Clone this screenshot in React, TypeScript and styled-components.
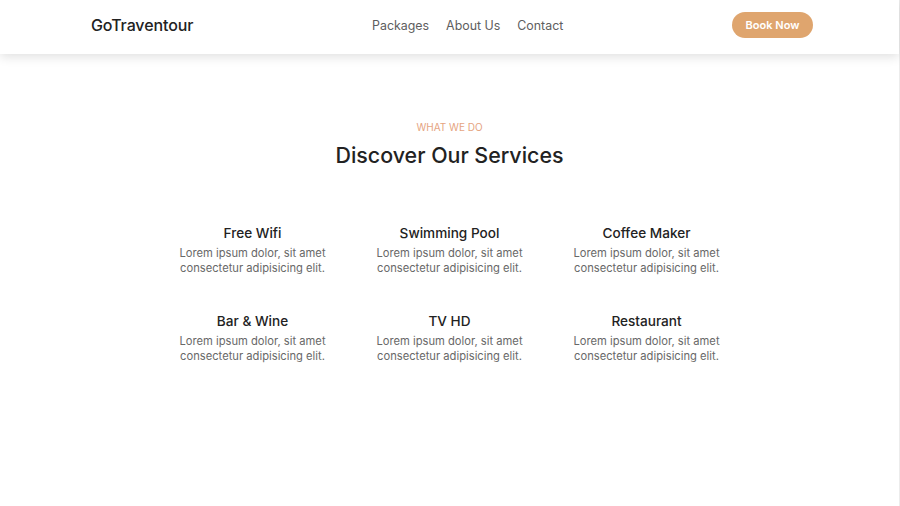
import React from "react";
import styled, { createGlobalStyle } from "styled-components";

const Global = createGlobalStyle`
  html, body { margin: 0; padding: 0; background: #fff; }
  body { font-family: "Inter", "Noto Sans", sans-serif; color: #222; }
  * { box-sizing: border-box; }
`;

const Page = styled.div`
  min-height: 506px;
  border-right: 1px solid #ececec;
  background: #fff;
`;

const Header = styled.header`
  height: 54px;
  display: flex;
  align-items: center;
  justify-content: space-between;
  padding: 0 86px 4px 91px;
  background: #fff;
  box-shadow: 0 3px 10px rgba(0, 0, 0, 0.12);
  position: relative;
  z-index: 1;
`;

const Logo = styled.div`
  font-size: 16px;
  font-weight: 500;
  color: #222;
  letter-spacing: -0.1px;
`;

const Nav = styled.nav`
  display: flex;
  gap: 17px;
  margin-left: 10px;
`;

const NavLink = styled.a`
  font-size: 12.4px;
  font-weight: 400;
  color: #5e5e5e;
  text-decoration: none;
`;

const BookButton = styled.button`
  width: 81px;
  height: 26px;
  border: none;
  border-radius: 13px;
  background: #dfa56e;
  color: #fff;
  font-family: inherit;
  font-size: 11px;
  font-weight: 600;
  cursor: pointer;
`;

const Section = styled.section`
  display: flex;
  flex-direction: column;
  align-items: center;
  padding-top: 66px;
`;

const Eyebrow = styled.div`
  font-size: 10px;
  color: #e5a47f;
  text-transform: uppercase;
  line-height: 14px;
`;

const Title = styled.h2`
  margin: 7px 0 0;
  font-size: 21.4px;
  font-weight: 500;
  color: #222;
  line-height: 28px;
`;

const Grid = styled.div`
  margin-top: 55px;
  display: grid;
  grid-template-columns: repeat(3, 197px);
  row-gap: 36px;
`;

const Card = styled.div`
  display: flex;
  flex-direction: column;
  align-items: center;
  text-align: center;
`;

const CardTitle = styled.h3`
  margin: 0;
  font-size: 13.6px;
  font-weight: 500;
  color: #222;
  line-height: 18px;
`;

const CardText = styled.p`
  margin: 4px 0 0;
  font-size: 11.2px;
  color: #686868;
  line-height: 15px;
`;

const services = [
  "Free Wifi",
  "Swimming Pool",
  "Coffee Maker",
  "Bar & Wine",
  "TV HD",
  "Restaurant",
];

export default function App() {
  return (
    <>
      <Global />
      <Page>
        <Header>
          <Logo>GoTraventour</Logo>
          <Nav>
            <NavLink href="#">Packages</NavLink>
            <NavLink href="#">About Us</NavLink>
            <NavLink href="#">Contact</NavLink>
          </Nav>
          <BookButton>Book Now</BookButton>
        </Header>
        <Section>
          <Eyebrow>What we do</Eyebrow>
          <Title>Discover Our Services</Title>
          <Grid>
            {services.map((s) => (
              <Card key={s}>
                <CardTitle>{s}</CardTitle>
                <CardText>
                  Lorem ipsum dolor, sit amet
                  <br />
                  consectetur adipisicing elit.
                </CardText>
              </Card>
            ))}
          </Grid>
        </Section>
      </Page>
    </>
  );
}
